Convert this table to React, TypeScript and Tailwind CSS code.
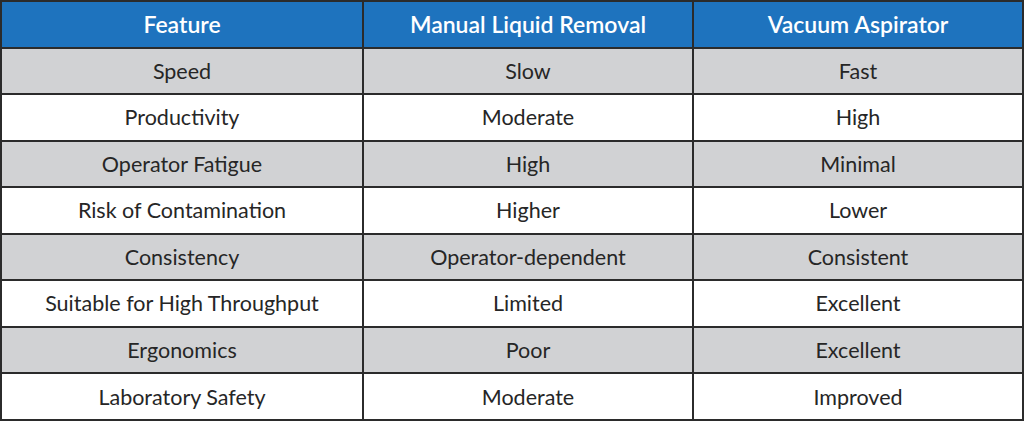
import React from 'react';

const rows = [
  ['Speed', 'Slow', 'Fast'],
  ['Productivity', 'Moderate', 'High'],
  ['Operator Fatigue', 'High', 'Minimal'],
  ['Risk of Contamination', 'Higher', 'Lower'],
  ['Consistency', 'Operator-dependent', 'Consistent'],
  ['Suitable for High Throughput', 'Limited', 'Excellent'],
  ['Ergonomics', 'Poor', 'Excellent'],
  ['Laboratory Safety', 'Moderate', 'Improved'],
];

const App = () => {
  return (
    <div
      className="w-[1024px] h-[421px] bg-white"
      style={{ fontFamily: 'Lato, "Open Sans", sans-serif' }}
    >
      <div className="grid grid-cols-[360px_328px_1fr] grid-rows-9 gap-[2px] p-[2px] w-full h-full bg-[#2b2b2b]">
        {['Feature', 'Manual Liquid Removal', 'Vacuum Aspirator'].map((h) => (
          <div
            key={h}
            className="flex items-center justify-center bg-[#1e73be] text-white text-[23px] font-semibold"
          >
            {h}
          </div>
        ))}

        {rows.map((row, i) =>
          row.map((cell, j) => (
            <div
              key={`${i}-${j}`}
              className={`flex items-center justify-center text-[21.5px] text-[#262626] ${
                i % 2 === 0 ? 'bg-[#d1d2d4]' : 'bg-white'
              }`}
            >
              {cell}
            </div>
          ))
        )}
      </div>
    </div>
  );
};

export default App;
